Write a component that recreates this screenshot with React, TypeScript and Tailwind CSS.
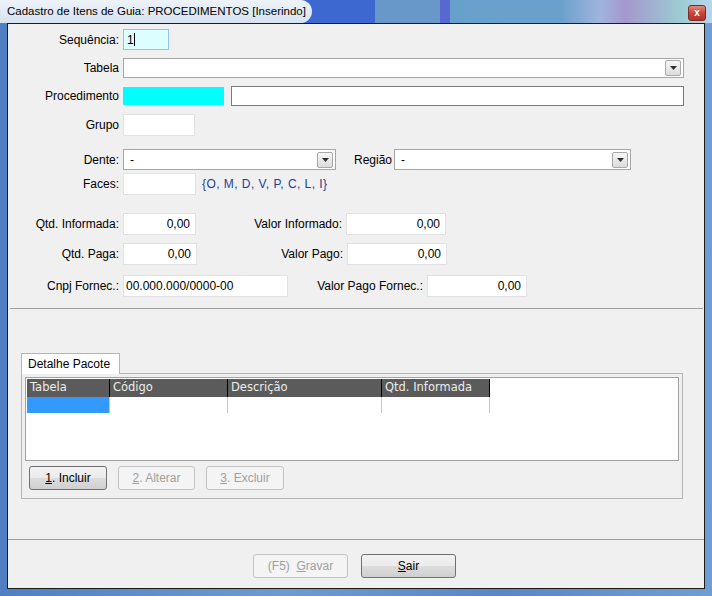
import React from 'react';

const font = "font-['Liberation_Sans','Arial',sans-serif]";

function Arrow() {
  return (
    <div className="w-[16px] h-[16px] mr-[2px] border border-[#a8a8a8] rounded-[2px] bg-[linear-gradient(#f6f6f6,#dcdcdc)] flex items-center justify-center">
      <svg width="7" height="4" viewBox="0 0 7 4">
        <path d="M0 0h7L3.5 4z" fill="#303030" />
      </svg>
    </div>
  );
}

function Select({ w, value = '' }: { w: string; value?: string }) {
  return (
    <div className={`${w} h-full bg-white border border-[#a6a6a6] flex items-center justify-between`}>
      <span className="pl-[6px] text-[12px] text-black">{value}</span>
      <Arrow />
    </div>
  );
}

function Field({ w, value = '', right = false }: { w: string; value?: string; right?: boolean }) {
  return (
    <div
      className={`${w} h-full bg-white border border-[#e2e2e2] flex items-center ${
        right ? 'justify-end pr-[5px]' : 'pl-[2px]'
      } text-[12px] text-black`}
    >
      {value}
    </div>
  );
}

function Label({ children, w = 'w-[115px]' }: { children: React.ReactNode; w?: string }) {
  return <div className={`${w} shrink-0 text-right pr-[4px] text-[12px] text-black whitespace-nowrap`}>{children}</div>;
}

function Btn({ children, disabled = false, w }: { children: React.ReactNode; disabled?: boolean; w: string }) {
  return (
    <div
      className={`${w} h-[24px] rounded-[3px] border flex items-center justify-center text-[12px] ${
        disabled
          ? 'border-[#c4c4c4] bg-[#f4f4f4] text-[#a0a0a0]'
          : 'border-[#707070] bg-[linear-gradient(#f2f2f2_0%,#ebebeb_50%,#dddddd_51%,#cfcfcf_100%)] text-black'
      }`}
    >
      {children}
    </div>
  );
}

export default function App() {
  return (
    <div className={`${font} w-[712px] h-[596px] flex flex-col bg-[linear-gradient(90deg,#4f7fc0,#6d9bd0_40%,#5a86c4_70%,#6f9ed2)]`}>
      {/* title bar */}
      <div className="h-[23px] shrink-0 relative bg-[linear-gradient(90deg,#3d68cf_0,#3d68cf_375px,#6798c9_375px,#6798c9_440px,#5868d0_440px,#5868d0_450px,#68a0cc_450px,#6aa0cc_560px,#9fb4de_600px,#a597cf_625px,#9ccbd2_680px,#b8d6ec_712px)] flex items-center">
        <div className="h-[23px] w-[312px] rounded-r-[12px] bg-[linear-gradient(#eef3f9,#d6e2ef)] flex items-center pl-[7px] text-[11.5px] text-black whitespace-nowrap overflow-hidden">
          Cadastro de Itens de Guia: PROCEDIMENTOS [Inserindo]
        </div>
        <div className="absolute left-[688px] top-[5px] w-[18px] h-[16px] rounded-[3px] border border-[#7a2a22] bg-[linear-gradient(#e08a78,#c8453a_50%,#b23427)] flex items-center justify-center text-white text-[10px] font-bold leading-none">
          x
        </div>
      </div>

      {/* client */}
      <div className="flex-1 mx-[7px] mb-[7px] border border-[#1c1c1c] bg-[#f0f0f0] flex flex-col">
        {/* Sequência */}
        <div className="mt-[5px] h-[21px] flex items-center">
          <Label>Sequência:</Label>
          <div className="w-[46px] h-full bg-[#dcfeff] border border-[#94c4e8] flex items-center pl-[3px] text-[12px]">
            1<span className="w-px h-[13px] bg-black" />
          </div>
        </div>
        {/* Tabela */}
        <div className="mt-[8px] h-[20px] flex items-center">
          <Label>Tabela</Label>
          <Select w="w-[561px]" />
        </div>
        {/* Procedimento */}
        <div className="mt-[8px] h-[20px] flex items-center">
          <Label>Procedimento</Label>
          <div className="w-[101px] h-[18px] bg-[#00ffff]" />
          <div className="ml-[7px] w-[453px] h-full bg-white border border-[#7a7a7a]" />
        </div>
        {/* Grupo */}
        <div className="mt-[8px] h-[22px] flex items-center">
          <Label>Grupo</Label>
          <Field w="w-[72px]" />
        </div>
        {/* Dente / Região */}
        <div className="mt-[13px] h-[21px] flex items-center">
          <Label>Dente:</Label>
          <Select w="w-[213px]" value="-" />
          <div className="ml-[18px] text-[12px]">Região</div>
          <div className="ml-[2px] h-full">
            <Select w="w-[237px]" value="-" />
          </div>
        </div>
        {/* Faces */}
        <div className="mt-[3px] h-[22px] flex items-center">
          <Label>Faces:</Label>
          <Field w="w-[73px]" />
          <div className="ml-[6px] text-[12px] tracking-[0.45px] text-[#1f3f9a]">{'{O, M, D, V, P, C, L, I}'}</div>
        </div>
        {/* Qtd Informada */}
        <div className="mt-[18px] h-[22px] flex items-center">
          <Label>Qtd. Informada:</Label>
          <Field w="w-[73px]" value="0,00" right />
          <Label w="w-[150px]">Valor Informado:</Label>
          <Field w="w-[100px]" value="0,00" right />
        </div>
        {/* Qtd Paga */}
        <div className="mt-[8px] h-[22px] flex items-center">
          <Label>Qtd. Paga:</Label>
          <Field w="w-[74px]" value="0,00" right />
          <Label w="w-[150px]">Valor Pago:</Label>
          <Field w="w-[100px]" value="0,00" right />
        </div>
        {/* Cnpj */}
        <div className="mt-[10px] h-[22px] flex items-center">
          <Label>Cnpj Fornec.:</Label>
          <Field w="w-[165px]" value="00.000.000/0000-00" />
          <Label w="w-[139px]">Valor Pago Fornec.:</Label>
          <Field w="w-[100px]" value="0,00" right />
        </div>

        <div className="mt-[11px] ml-[2px] mr-[1px] h-px bg-[#a0a0a0]" />

        {/* Tab */}
        <div className="mt-[43px] ml-[13px] flex flex-col w-[662px]">
          <div className="w-[99px] h-[21px] bg-white border border-b-0 border-[#b5b5b5] flex items-center pl-[6px] text-[12px] relative top-px">
            Detalhe Pacote
          </div>
          <div className="h-[126px] border border-[#b5b5b5] bg-[#f0f0f0] flex flex-col p-[3px]">
            <div className="h-[84px] border border-[#a0a0a0] bg-white p-px">
              <div className="flex h-[18px] text-[#ececec] font-['DejaVu_Sans',sans-serif]">
                <div className="w-[82px] bg-[#5b5b5b] pl-[3px] flex items-center text-[11.5px]">Tabela</div>
                <div className="w-[118px] bg-[#5b5b5b] border-l border-black pl-[3px] flex items-center text-[11.5px]">Código</div>
                <div className="w-[154px] bg-[#5b5b5b] border-l border-black pl-[3px] flex items-center text-[11.5px]">Descrição</div>
                <div className="w-[109px] bg-[#5b5b5b] border-x border-black pl-[3px] flex items-center text-[11.5px]">Qtd. Informada</div>
              </div>
              <div className="flex h-[16px]">
                <div className="w-[82px] bg-[#3399ff]" />
                <div className="w-[118px] border-l border-[#c8c8c8]" />
                <div className="w-[154px] border-l border-[#c8c8c8]" />
                <div className="w-[109px] border-x border-[#c8c8c8]" />
              </div>
            </div>
            <div className="mt-[5px] ml-[4px] flex gap-[11px]">
              <Btn w="w-[78px]">
                <span>
                  <u>1</u>. Incluir
                </span>
              </Btn>
              <Btn w="w-[77px]" disabled>
                <span>
                  <u>2</u>. Alterar
                </span>
              </Btn>
              <Btn w="w-[78px]" disabled>
                <span>
                  <u>3</u>. Excluir
                </span>
              </Btn>
            </div>
          </div>
        </div>

        <div className="mt-[40px] h-px bg-[#a0a0a0]" />

        <div className="mt-[14px] flex justify-center gap-[13px] pr-[3px]">
          <Btn w="w-[95px]" disabled>
            <span>
              (F5)&nbsp; <u>G</u>ravar
            </span>
          </Btn>
          <Btn w="w-[95px]">
            <span>
              <u>S</u>air
            </span>
          </Btn>
        </div>
      </div>
    </div>
  );
}
